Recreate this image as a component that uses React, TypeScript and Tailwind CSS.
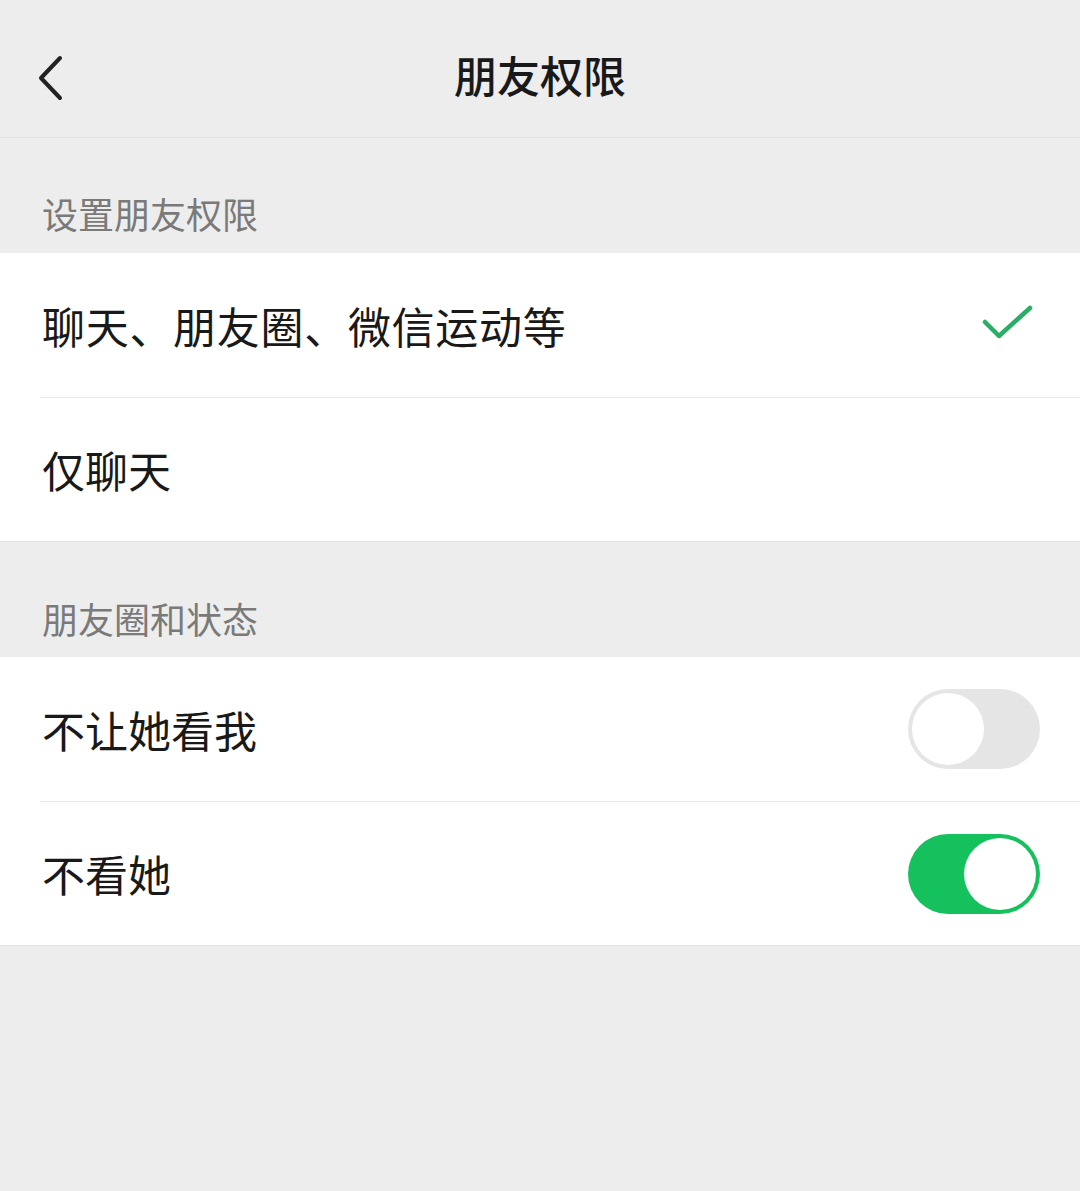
import React, { useState } from 'react'

const font = { fontFamily: '"Noto Sans CJK SC", "Noto Sans", sans-serif' }

const Toggle = ({ on, onClick }: { on: boolean; onClick: () => void }) => (
  <button
    onClick={onClick}
    className={`relative w-[132px] h-[80px] rounded-full shrink-0 ${on ? 'bg-[#15c15c]' : 'bg-[#e5e5e5]'}`}
  >
    <span
      className={`absolute top-[4px] w-[72px] h-[72px] rounded-full bg-white ${on ? 'left-[56px]' : 'left-[4px]'}`}
    />
  </button>
)

const Check = () => (
  <svg width="52" height="40" viewBox="0 0 52 40" fill="none" stroke="#2aae67" strokeWidth="4.5" strokeLinecap="round" strokeLinejoin="round">
    <path d="M3 17 L17 31 L48 3" />
  </svg>
)

const App = () => {
  const [mode, setMode] = useState<'all' | 'chat'>('all')
  const [hideMine, setHideMine] = useState(false)
  const [hideHers, setHideHers] = useState(true)

  return (
    <div className="min-h-[1191px] bg-[#ededed] text-[#191919]" style={font}>
      <div className="h-[138px] flex items-center pt-[12px] relative border-b border-[#e3e3e3]">
        <button className="absolute left-[36px] top-[54px]">
          <svg width="32" height="48" viewBox="0 0 32 48" fill="none" stroke="#222" strokeWidth="4" strokeLinecap="round" strokeLinejoin="round">
            <path d="M24 4 L5 24 L24 44" />
          </svg>
        </button>
        <h1 className="w-full text-center text-[43px] font-medium leading-none">朋友权限</h1>
      </div>

      <div className="h-[115px] flex items-end pb-[22px] px-[42px] text-[36px] text-[#7a7a7a] leading-none">设置朋友权限</div>

      <div className="bg-white border-b border-[#e3e3e3]">
        <button onClick={() => setMode('all')} className="w-full h-[144px] flex items-center justify-between pl-[42px] pr-[46px] text-[43px] leading-none">
          <span className="tracking-[0.7px]">聊天、朋友圈、微信运动等</span>
          {mode === 'all' && <Check />}
        </button>
        <div className="ml-[40px] h-px bg-[#e8e8e8]" />
        <button onClick={() => setMode('chat')} className="w-full h-[143px] flex items-center justify-between pl-[42px] pr-[46px] text-[43px] leading-none">
          <span>仅聊天</span>
          {mode === 'chat' && <Check />}
        </button>
      </div>

      <div className="h-[115px] flex items-end pb-[21px] px-[42px] text-[36px] text-[#7a7a7a] leading-none">朋友圈和状态</div>

      <div className="bg-white border-b border-[#e3e3e3]">
        <div className="h-[144px] flex items-center justify-between pl-[42px] pr-[40px] text-[43px] leading-none">
          <span>不让她看我</span>
          <Toggle on={hideMine} onClick={() => setHideMine(!hideMine)} />
        </div>
        <div className="ml-[40px] h-px bg-[#e8e8e8]" />
        <div className="h-[143px] flex items-center justify-between pl-[42px] pr-[40px] text-[43px] leading-none">
          <span>不看她</span>
          <Toggle on={hideHers} onClick={() => setHideHers(!hideHers)} />
        </div>
      </div>
    </div>
  )
}

export default App
